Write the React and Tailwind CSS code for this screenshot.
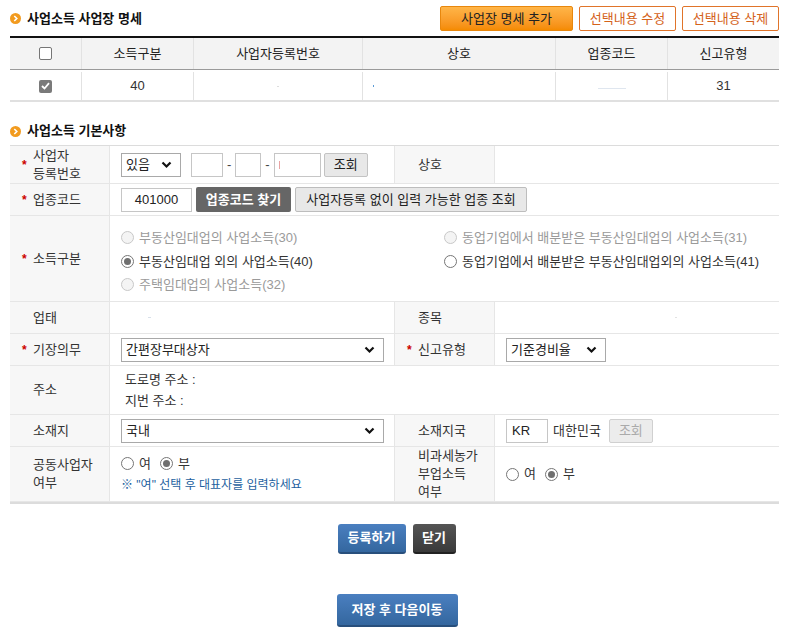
import React from 'react';

const font = { fontFamily: '"Liberation Sans", "Noto Sans CJK KR", sans-serif' };

function TitleIcon() {
  return (
    <svg width="11" height="11" viewBox="0 0 11 11" className="shrink-0">
      <circle cx="5.5" cy="5.5" r="5.5" fill="#f29b1f" />
      <path d="M4.3 3 L6.8 5.5 L4.3 8" stroke="#fff" strokeWidth="1.6" fill="none" />
    </svg>
  );
}

function Chevron() {
  return (
    <svg width="11" height="8" viewBox="0 0 11 8" className="shrink-0">
      <path d="M1.5 1.5 L5.5 5.5 L9.5 1.5" stroke="#111" strokeWidth="2.2" fill="none" />
    </svg>
  );
}

function Select({ value, className }) {
  return (
    <div className={`flex items-center justify-between border border-[#a9a9a9] bg-white h-[24px] pl-[4px] pr-[8px] text-[13px] text-[#222] ${className}`}>
      <span>{value}</span>
      <Chevron />
    </div>
  );
}

function Radio({ checked, disabled, label }) {
  return (
    <label className={`flex items-center gap-[5px] ${disabled ? 'text-[#9a9a9a]' : 'text-[#333]'}`}>
      <span
        className={`w-[13px] h-[13px] rounded-full border flex items-center justify-center ${
          disabled ? 'border-[#c8c8c8] bg-[#f4f4f4]' : 'border-[#767676] bg-white'
        }`}
      >
        {checked && <span className="w-[7px] h-[7px] rounded-full bg-[#6f6f6f]" />}
      </span>
      <span>{label}</span>
    </label>
  );
}

function Label({ required, children, className = '' }) {
  return (
    <div className={`bg-[#f7f7f7] flex items-center pl-[12px] text-[13px] text-[#333] leading-[18px] ${className}`}>
      <span className="w-[11px] text-[#cc0000] font-bold text-[12px] leading-none">{required ? '*' : ''}</span>
      <span>{children}</span>
    </div>
  );
}

function Cell({ children, className = '' }) {
  return <div className={`flex items-center pl-[11px] text-[13px] text-[#333] ${className}`}>{children}</div>;
}

const columns = [
  { key: 'chk', w: 'w-[71px]' },
  { key: '소득구분', w: 'w-[112px]' },
  { key: '사업자등록번호', w: 'w-[169px]' },
  { key: '상호', w: 'w-[193px]' },
  { key: '업종코드', w: 'w-[112px]' },
  { key: '신고유형', w: 'w-[112px]' },
];

export default function App() {
  return (
    <div style={font} className="bg-white w-[789px] h-[632px] px-[10px] pt-[6px] text-[#333]">
      {/* 사업장 명세 */}
      <div className="flex items-center justify-between h-[25px]">
        <div className="flex items-center gap-[6px]">
          <TitleIcon />
          <h2 className="text-[13px] font-bold text-[#111]">사업소득 사업장 명세</h2>
        </div>
        <div className="flex items-center gap-[6px]">
          <button className="h-[25px] w-[133px] rounded-[2px] border border-[#e8870d] bg-gradient-to-b from-[#ffb547] to-[#f58b00] text-[13px] text-[#222]">
            사업장 명세 추가
          </button>
          <button className="h-[25px] w-[97px] rounded-[2px] border border-[#e0742a] bg-white text-[13px] text-[#d4621a]">
            선택내용 수정
          </button>
          <button className="h-[25px] w-[97px] rounded-[2px] border border-[#e0742a] bg-white text-[13px] text-[#d4621a]">
            선택내용 삭제
          </button>
        </div>
      </div>

      <div className="mt-[5px] border-t-2 border-[#111]">
        <div className="flex h-[32px] bg-[#f3f3f3] border-b border-[#9a9a9a] text-[13px] text-[#222]">
          {columns.map((c, i) => (
            <div key={c.key} className={`${c.w} flex items-center justify-center ${i > 0 ? 'border-l border-[#e2e2e2]' : ''}`}>
              {c.key === 'chk' ? (
                <span className="w-[13px] h-[13px] border border-[#767676] rounded-[2px] bg-white" />
              ) : (
                c.key
              )}
            </div>
          ))}
        </div>
        <div className="flex h-[32px] pt-[2px] border-b-2 border-[#e0e0e0] text-[13px] text-[#333]">
          <div className="w-[71px] flex items-center justify-center">
            <span className="w-[13px] h-[13px] rounded-[2px] bg-[#7a7a7a] flex items-center justify-center">
              <svg width="9" height="8" viewBox="0 0 9 8">
                <path d="M1 4 L3.5 6.5 L8 1.2" stroke="#fff" strokeWidth="1.8" fill="none" />
              </svg>
            </span>
          </div>
          <div className="w-[112px] flex items-center justify-center border-l border-[#e2e2e2]">40</div>
          <div className="w-[169px] flex items-center justify-center border-l border-[#e2e2e2]">
            <span className="w-[2px] h-[1px] bg-[#ddd]" />
          </div>
          <div className="w-[193px] flex items-center pl-[10px] border-l border-[#e2e2e2]">
            <span className="w-[1px] h-[2px] bg-[#5b9bd5]" />
          </div>
          <div className="w-[112px] flex items-center justify-center border-l border-[#e2e2e2]">
            <span className="w-[28px] h-[1px] mt-[4px] bg-[#dfe6ef]" />
          </div>
          <div className="w-[112px] flex items-center justify-center border-l border-[#e2e2e2]">31</div>
        </div>
      </div>

      {/* 기본사항 */}
      <div className="flex items-center gap-[6px] mt-[21px] h-[16px]">
        <TitleIcon />
        <h2 className="text-[13px] font-bold text-[#111]">사업소득 기본사항</h2>
      </div>

      <div className="mt-[6px] border-t border-b-2 border-t-[#dcdcdc] border-b-[#dcdcdc] grid grid-cols-[100px_285px_100px_284px] [&>*]:border-b [&>*]:border-[#e6e6e6] text-[13px]">
        {/* row 1 */}
        <Label required className="h-[38px] border-r">사업자<br />등록번호</Label>
        <Cell className="h-[38px] gap-[4px] border-r">
          <Select value="있음" className="w-[60px]" />
          <span className="ml-[6px] w-[32px] h-[24px] border border-[#c6c6c6]" />
          <span className="text-[#444]">-</span>
          <span className="w-[26px] h-[24px] border border-[#c6c6c6]" />
          <span className="text-[#444]">-</span>
          <span className="w-[47px] h-[24px] border border-[#c6c6c6] flex items-center pl-[4px]">
            <span className="w-[1px] h-[8px] bg-[#e9a3a3]" />
          </span>
          <button className="ml-[-1px] w-[44px] h-[24px] border border-[#c3c3c3] bg-[#e8e8e8] rounded-[2px] text-[#222]">조회</button>
        </Cell>
        <Label className="h-[38px] border-r">상호</Label>
        <Cell className="h-[38px]" />

        {/* row 2 */}
        <Label required className="h-[32px] border-r">업종코드</Label>
        <Cell className="h-[32px] col-span-3 gap-[4px]">
          <span className="w-[71px] h-[24px] border border-[#c6c6c6] flex items-center justify-center text-[#222]">401000</span>
          <button className="w-[95px] h-[25px] rounded-[2px] bg-[#666] text-white font-bold">업종코드 찾기</button>
          <button className="w-[232px] h-[25px] rounded-[2px] border border-[#bdbdbd] bg-[#e8e8e8] text-[#222]">
            사업자등록 없이 입력 가능한 업종 조회
          </button>
        </Cell>

        {/* row 3 */}
        <Label required className="h-[86px] border-r">소득구분</Label>
        <div className="col-span-3 h-[86px] pl-[11px] pt-[10px] grid grid-cols-[323px_1fr] auto-rows-[23.5px] items-center text-[13px]">
          <Radio disabled label="부동산임대업의 사업소득(30)" />
          <Radio disabled label="동업기업에서 배분받은 부동산임대업의 사업소득(31)" />
          <Radio checked label="부동산임대업 외의 사업소득(40)" />
          <Radio label="동업기업에서 배분받은 부동산임대업외의 사업소득(41)" />
          <Radio disabled label="주택임대업의 사업소득(32)" />
        </div>

        {/* row 4 */}
        <Label className="h-[32px] border-r">업태</Label>
        <Cell className="h-[32px] border-r pl-[38px]">
          <span className="w-[3px] h-[1px] bg-[#d8e0ea]" />
        </Cell>
        <Label className="h-[32px] border-r">종목</Label>
        <Cell className="h-[32px] pl-[180px]">
          <span className="w-[2px] h-[1px] bg-[#e2e2e2]" />
        </Cell>

        {/* row 5 */}
        <Label required className="h-[32px] border-r">기장의무</Label>
        <Cell className="h-[32px] border-r">
          <Select value="간편장부대상자" className="w-[263px]" />
        </Cell>
        <Label required className="h-[32px] border-r">신고유형</Label>
        <Cell className="h-[32px]">
          <Select value="기준경비율" className="w-[100px]" />
        </Cell>

        {/* row 6 */}
        <Label className="h-[49px] border-r">주소</Label>
        <div className="col-span-3 h-[49px] pl-[15px] flex flex-col justify-center gap-[3px] leading-[18px] text-[13px] text-[#333]">
          <span>도로명 주소 :</span>
          <span>지번 주소 :</span>
        </div>

        {/* row 7 */}
        <Label className="h-[32px] border-r">소재지</Label>
        <Cell className="h-[32px] border-r">
          <Select value="국내" className="w-[263px]" />
        </Cell>
        <Label className="h-[32px] border-r">소재지국</Label>
        <Cell className="h-[32px] gap-[5px]">
          <span className="w-[42px] h-[24px] border border-[#c6c6c6] flex items-center pl-[5px] text-[#222]">KR</span>
          <span>대한민국</span>
          <button className="ml-[3px] w-[44px] h-[24px] border border-[#d0d0d0] bg-[#ececec] rounded-[2px] text-[#aaa]">조회</button>
        </Cell>

        {/* row 8 */}
        <Label className="h-[55px] border-r">공동사업자<br />여부</Label>
        <div className="h-[55px] border-r pl-[11px] flex flex-col justify-center gap-[3px]">
          <div className="flex items-center gap-[9px]">
            <Radio label="여" />
            <Radio checked label="부" />
          </div>
          <span className="text-[12px] text-[#1d5fa0]">※ "여" 선택 후 대표자를 입력하세요</span>
        </div>
        <Label className="h-[55px] border-r">비과세농가<br />부업소득<br />여부</Label>
        <Cell className="h-[55px] gap-[9px]">
          <Radio label="여" />
          <Radio checked label="부" />
        </Cell>
      </div>

      <div className="flex justify-center gap-[7px] mt-[20px] pl-[4px]">
        <button className="w-[68px] h-[30px] rounded-[3px] bg-gradient-to-b from-[#4a7fc0] to-[#34679f] border-b-2 border-[#284f7c] text-white font-bold text-[13px]">
          등록하기
        </button>
        <button className="w-[43px] h-[30px] rounded-[3px] bg-gradient-to-b from-[#555] to-[#3a3a3a] border-b-2 border-[#222] text-white font-bold text-[13px]">
          닫기
        </button>
      </div>

      <div className="flex justify-center mt-[40px] pl-[5px]">
        <button className="w-[121px] h-[33px] rounded-[3px] bg-gradient-to-b from-[#4a7fc0] to-[#34679f] border-b-2 border-[#284f7c] text-white font-bold text-[13px]">
          저장 후 다음이동
        </button>
      </div>
    </div>
  );
}
